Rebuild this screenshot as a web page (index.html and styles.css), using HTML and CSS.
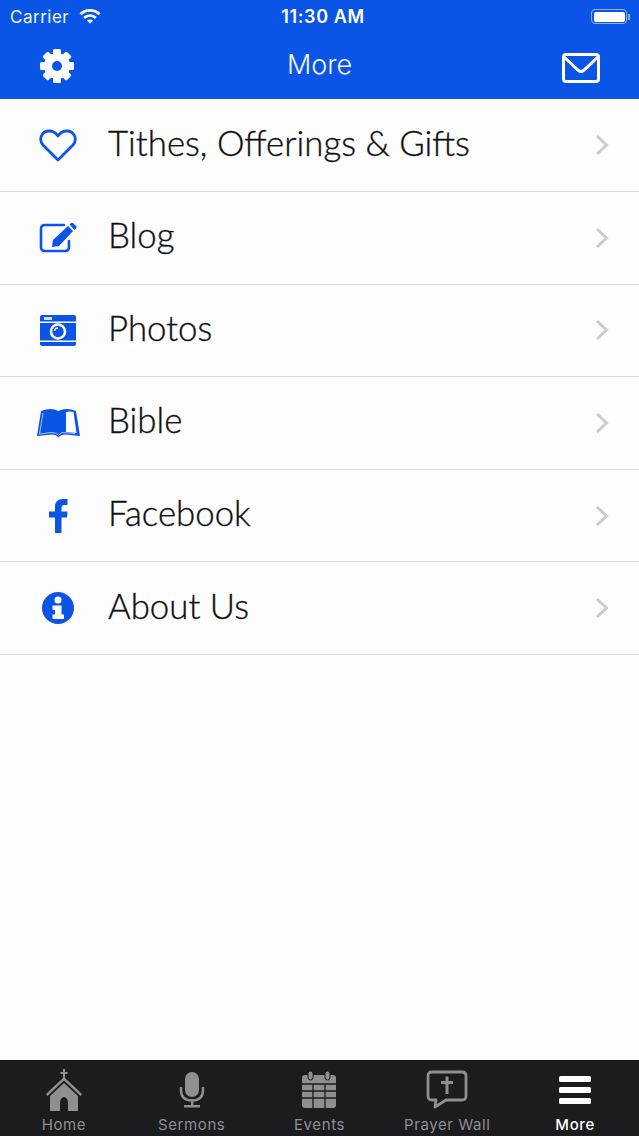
FILE: index.html
```html
<!DOCTYPE html>
<html lang="en">
<head>
    <meta charset="UTF-8">
    <meta name="viewport" content="width=device-width, initial-scale=1.0">
    <title>More</title>
    <link rel="stylesheet" href="styles.css">
</head>
<body>
<div class="screen">

    <header class="top">
        <div class="status">
            <div class="status-left">
                <span>Carrier</span>
                <svg class="wifi" width="22" height="16" viewBox="0 0 22 16">
                    <path d="M0.500 5.200C6.400-0.400 15.600-0.400 21.500 5.200L19.600 7.200C14.800 2.700 7.200 2.700 2.400 7.200Z" fill="#fff"/>
                    <path d="M4.200 9C8.200 5.300 13.800 5.300 17.800 9L15.900 10.900C13.200 8.300 8.800 8.300 6.100 10.900Z" fill="#fff"/>
                    <path d="M8 12.600C9.700 11 12.300 11 14 12.600L11 15.800Z" fill="#fff"/>
                </svg>
            </div>
            <div class="status-time">11:30 AM</div>
            <div class="status-right">
                <div class="battery"><div class="battery-fill"></div></div>
                <div class="battery-tip"></div>
            </div>
        </div>
        <div class="navbar">
            <svg class="nav-icon" width="36" height="36" viewBox="0 0 36 36">
                <g fill="#fff">
                    <circle cx="18" cy="18" r="13"/>
                    <rect x="14" y="1" width="8" height="34" rx="1.500"/>
                    <rect x="14" y="1" width="8" height="34" rx="1.500" transform="rotate(45 18 18)"/>
                    <rect x="14" y="1" width="8" height="34" rx="1.500" transform="rotate(90 18 18)"/>
                    <rect x="14" y="1" width="8" height="34" rx="1.500" transform="rotate(135 18 18)"/>
                </g>
                <circle cx="18" cy="18" r="5" fill="#0b55e6"/>
            </svg>
            <div class="nav-title">More</div>
            <svg class="nav-icon nav-mail" width="38" height="30" viewBox="0 0 38 30">
                <rect x="1.500" y="1.500" width="35" height="27" rx="2.500" fill="none" stroke="#fff" stroke-width="3"/>
                <path d="M2 4L16.500 17.500Q19 19.500 21.500 17.500L36 4" fill="none" stroke="#fff" stroke-width="3"/>
            </svg>
        </div>
    </header>

    <ul class="menu">
        <li class="menu-row">
            <span class="menu-icon">
                <svg width="38" height="33" viewBox="0 0 38 33">
                    <path d="M19 31L4 16C-1 10 3 2 10 2C14 2 17 4 19 7C21 4 24 2 28 2C35 2 39 10 34 16Z" fill="none" stroke="#0b55e6" stroke-width="2.800" stroke-linejoin="round"/>
                </svg>
            </span>
            <span class="menu-label">Tithes, Offerings &amp; Gifts</span>
            <svg class="chev" width="14" height="22" viewBox="0 0 14 22"><path d="M2 2L11.500 11L2 20" fill="none" stroke="#cbcbcf" stroke-width="3"/></svg>
        </li>
        <li class="menu-row">
            <span class="menu-icon">
                <svg width="38" height="32" viewBox="0 0 38 32">
                    <path d="M25 3H6Q2 3 2 7V25Q2 29 6 29H26Q30 29 30 25V19" fill="none" stroke="#0b55e6" stroke-width="2.600" stroke-linecap="round"/>
                    <path d="M14 18L29 4L34 9L20 24L13 25Z" fill="#0b55e6"/>
                    <path d="M30.500 2.500L32 1Q33 0.500 34 1L37.500 4.500Q38 5.500 37 6.500L35.500 8Z" fill="#0b55e6"/>
                </svg>
            </span>
            <span class="menu-label">Blog</span>
            <svg class="chev" width="14" height="22" viewBox="0 0 14 22"><path d="M2 2L11.500 11L2 20" fill="none" stroke="#cbcbcf" stroke-width="3"/></svg>
        </li>
        <li class="menu-row">
            <span class="menu-icon">
                <svg width="38" height="33" viewBox="0 0 38 33">
                    <rect x="1" y="1" width="36" height="31" rx="2" fill="#0b55e6"/>
                    <rect x="5" y="3" width="8" height="3" fill="#fff" opacity="0.8"/>
                    <rect x="1" y="7.500" width="36" height="1.500" fill="#fff"/>
                    <rect x="1" y="26.500" width="36" height="1.500" fill="#fff"/>
                    <circle cx="19" cy="17.500" r="7" fill="#0b55e6" stroke="#fff" stroke-width="2.600"/>
                    <path d="M15.500 17A3.500 3.500 0 0 1 19 14" fill="none" stroke="#fff" stroke-width="1.400"/>
                </svg>
            </span>
            <span class="menu-label">Photos</span>
            <svg class="chev" width="14" height="22" viewBox="0 0 14 22"><path d="M2 2L11.500 11L2 20" fill="none" stroke="#cbcbcf" stroke-width="3"/></svg>
        </li>
        <li class="menu-row">
            <span class="menu-icon">
                <svg width="43" height="30" viewBox="0 0 43 30">
                    <path d="M4 3Q14-1 21.500 3Q29-1 39 3L43 28L28 26.500Q24 26.500 21.500 29.500Q19 26.500 15 26.500L0 28Z" fill="#0b55e6"/>
                    <path d="M29 4Q33 3 36.500 4L39.500 25L29 24Z" fill="#fff"/>
                    <path d="M6 5L2.500 26L15 24.500Q19 24.500 21.500 27L25 24.500L38 25.500" fill="none" stroke="#a9c2f7" stroke-width="1"/>
                </svg>
            </span>
            <span class="menu-label">Bible</span>
            <svg class="chev" width="14" height="22" viewBox="0 0 14 22"><path d="M2 2L11.500 11L2 20" fill="none" stroke="#cbcbcf" stroke-width="3"/></svg>
        </li>
        <li class="menu-row">
            <span class="menu-icon">
                <svg width="19" height="34" viewBox="0 0 19 34">
                    <path d="M6 34V18.500H0V12.500H6V8Q6 0 14 0H18.500V6H15.500Q12.500 6 12.500 9V12.500H18.500L18 18.500H12.500V34Z" fill="#0b55e6"/>
                </svg>
            </span>
            <span class="menu-label">Facebook</span>
            <svg class="chev" width="14" height="22" viewBox="0 0 14 22"><path d="M2 2L11.500 11L2 20" fill="none" stroke="#cbcbcf" stroke-width="3"/></svg>
        </li>
        <li class="menu-row">
            <span class="menu-icon">
                <svg width="32" height="32" viewBox="0 0 32 32">
                    <circle cx="16" cy="16" r="16" fill="#0b55e6"/>
                    <circle cx="16" cy="8" r="3.500" fill="#fff"/>
                    <path d="M10.500 13.500H19.500V22.500H22V27H10.500V22.500H13V18H10.500Z" fill="#fff"/>
                </svg>
            </span>
            <span class="menu-label">About Us</span>
            <svg class="chev" width="14" height="22" viewBox="0 0 14 22"><path d="M2 2L11.500 11L2 20" fill="none" stroke="#cbcbcf" stroke-width="3"/></svg>
        </li>
    </ul>

    <nav class="tabs">
        <div class="tab">
            <svg width="38" height="42" viewBox="0 0 38 42">
                <path d="M18 0H20V3H22.500V5H20V9L37 25L35.500 27L19 11.500L2.500 27L1 25L18 9V5H15.500V3H18Z" fill="#8e8e93"/>
                <path d="M19 14L33 27V42H23V34Q23 29 19 28Q15 29 15 34V42H5V27Z" fill="#8e8e93"/>
            </svg>
            <span>Home</span>
        </div>
        <div class="tab">
            <svg width="26" height="36" viewBox="0 0 26 36">
                <rect x="6" y="0" width="14" height="25" rx="7" fill="#8e8e93"/>
                <path d="M2 15V18Q2 28.500 13 28.500Q24 28.500 24 18V15" fill="none" stroke="#8e8e93" stroke-width="2.500"/>
                <rect x="12" y="28" width="2.500" height="5" fill="#8e8e93"/>
                <rect x="5" y="33" width="16" height="2.500" fill="#8e8e93"/>
            </svg>
            <span>Sermons</span>
        </div>
        <div class="tab">
            <svg width="36" height="38" viewBox="0 0 36 38">
                <rect x="1" y="4" width="34" height="33" rx="3" fill="#8e8e93"/>
                <rect x="7" y="0" width="5" height="9" rx="2.500" fill="#8e8e93" stroke="#1c1c1e" stroke-width="1"/>
                <rect x="24" y="0" width="5" height="9" rx="2.500" fill="#8e8e93" stroke="#1c1c1e" stroke-width="1"/>
                <path d="M1 13H35M1 20H35M1 27H35M12 13V37M24 13V37" stroke="#1c1c1e" stroke-width="1.300"/>
            </svg>
            <span>Events</span>
        </div>
        <div class="tab">
            <svg width="42" height="40" viewBox="0 0 42 40">
                <path d="M6 2H36Q40 2 40 6V26Q40 30 36 30H20L9 37L10 30H6Q2 30 2 26V6Q2 2 6 2Z" fill="none" stroke="#8e8e93" stroke-width="2.800" stroke-linejoin="round"/>
                <path d="M19.500 6.500H22.500V11H27V14H22.500V24H19.500V14H15V11H19.500Z" fill="#8e8e93"/>
            </svg>
            <span>Prayer Wall</span>
        </div>
        <div class="tab tab-on">
            <svg width="32" height="28" viewBox="0 0 32 28">
                <rect x="0" y="0" width="32" height="6" rx="1.500" fill="#fff"/>
                <rect x="0" y="11" width="32" height="6" rx="1.500" fill="#fff"/>
                <rect x="0" y="22" width="32" height="6" rx="1.500" fill="#fff"/>
            </svg>
            <span>More</span>
        </div>
    </nav>

</div>
</body>
</html>
```

FILE: styles.css
```css
body {
    margin: 0;
    padding: 0;
    background-color: #fdfdfd;
    font-family: Lato, sans-serif;
}

.screen {
    width: 639px;
    height: 1136px;
    display: flex;
    flex-direction: column;
    overflow: hidden;
}

.top {
    height: 99.4px;
    background-color: #0b55e6;
    color: #fff;
    flex-shrink: 0;
}

.status {
    height: 33px;
    display: grid;
    grid-template-columns: 1fr auto 1fr;
    align-items: center;
    padding: 0 9px 0 10px;
    font-family: Inter, sans-serif;
    font-size: 17px;
}

.status-left {
    display: flex;
    align-items: center;
    gap: 10px;
    letter-spacing: 0.5px;
    opacity: 0.95;
}

.wifi {
    margin-top: -2px;
}

.status-time {
    margin-left: 6px;
    font-size: 18px;
    font-weight: 600;
    letter-spacing: 0.6px;
}

.status-right {
    display: flex;
    align-items: center;
    justify-content: flex-end;
    gap: 1px;
}

.battery {
    width: 36px;
    height: 15px;
    border: 1px solid #8fb2f8;
    border-radius: 4px;
    padding: 1.5px;
    box-sizing: border-box;
}

.battery-fill {
    height: 100%;
    background-color: #fff;
    border-radius: 2px;
}

.battery-tip {
    width: 2px;
    height: 6px;
    background-color: #8fb2f8;
}

.navbar {
    height: 66px;
    padding: 0 39px;
    display: flex;
    align-items: center;
    justify-content: space-between;
    box-sizing: border-box;
}

.nav-title {
    margin: 0 0 4px 2px;
    font-family: Inter, sans-serif;
    font-size: 27px;
    font-weight: 300;
    opacity: 0.95;
}

.nav-mail {
    margin-top: 3px;
}

.menu {
    list-style: none;
    margin: 0;
    padding: 0;
    flex: 1;
}

.menu-row {
    height: 92.6px;
    box-sizing: border-box;
    border-bottom: 1px solid #dcdcdf;
    display: flex;
    align-items: center;
    padding-right: 30px;
}

.menu-icon {
    width: 108px;
    padding-left: 8px;
    display: flex;
    justify-content: center;
    box-sizing: border-box;
    flex-shrink: 0;
}

.menu-label {
    flex: 1;
    margin-top: -6px;
    font-size: 34.8px;
    font-weight: 300;
    color: #111;
    -webkit-text-stroke: 0.35px #111;
}

.tabs {
    height: 76px;
    background-color: #1c1c1e;
    border-top: 1px solid #111;
    display: grid;
    grid-template-columns: repeat(5, 1fr);
    box-sizing: border-box;
    flex-shrink: 0;
    overflow: hidden;
}

.tab {
    display: grid;
    grid-template-rows: 43px 26px;
    justify-items: center;
    align-items: center;
    padding-top: 7px;
    color: #8e8e93;
    font-family: Inter, sans-serif;
    font-size: 15px;
    letter-spacing: 0.6px;
    box-sizing: border-box;
}

.tab-on {
    color: #fff;
    font-weight: 500;
}
```
